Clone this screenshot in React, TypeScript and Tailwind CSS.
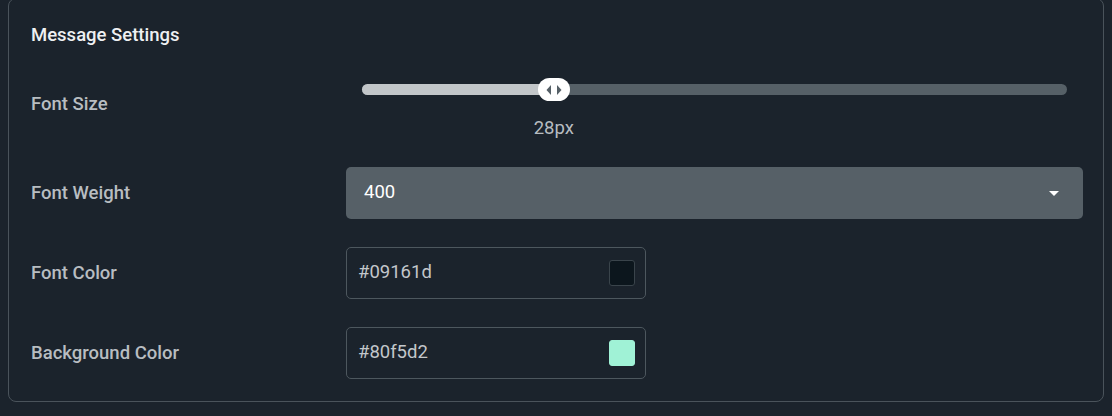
import { ReactNode } from "react"

interface RowProps {
    label: string
    height: string
    children: ReactNode
}

function Row(props: RowProps) {
    return <div className={`flex items-center ${props.height}`}>
        <div className="w-[315px] shrink-0 pt-[2px] text-[18.5px] font-medium text-[#b8bdc1]">{props.label}</div>
        <div className="flex-1 self-stretch">{props.children}</div>
    </div>
}

function FontSizeSlider() {
    const pct = "27.2%"
    return <div className="relative mx-4 h-full">
        <div className="absolute inset-x-0 top-[15px] h-[11px] rounded-full bg-[#566067]" />
        <div className="absolute left-0 top-[15px] h-[11px] rounded-l-full bg-[#c2c6c9]" style={{ width: pct }} />
        <div
            className="absolute top-[9px] flex h-[23px] w-[32px] -translate-x-1/2 items-center justify-center gap-[6px] rounded-full bg-white"
            style={{ left: pct }}>
            <svg width="5" height="10" viewBox="0 0 5 10"><path d="M5 0 L0.5 5 L5 10 Z" fill="#566067" /></svg>
            <svg width="5" height="10" viewBox="0 0 5 10"><path d="M0 0 L4.5 5 L0 10 Z" fill="#566067" /></svg>
        </div>
        <div
            className="absolute top-[47px] -translate-x-1/2 text-[18.5px] leading-6 text-[#b7bcc0]"
            style={{ left: pct }}>
            28px
        </div>
    </div>
}

function ColorInput(props: { value: string, swatch: string, border: string }) {
    return <div className="flex h-full w-[300px] items-center justify-between rounded-[5px] border border-[#4d575e] pl-[11px] pr-[10px]">
        <span className="text-[18.5px] text-[#c3c7cb]">{props.value}</span>
        <div className={`h-[26px] w-[26px] rounded-[3px] border ${props.border} ${props.swatch}`} />
    </div>
}

export default function App() {
    return <div className="min-h-[416px] bg-[#1b232c] px-2 pb-[14px] font-['Roboto',sans-serif]">
        <div className="-mt-[2px] flex flex-col rounded-[8px] border border-[#4a535b] pb-[22px] pl-[22px] pr-[20px] pt-[24px]">
            <div className="h-6 text-[18.5px] font-medium leading-6 text-[#eef0f2]">Message Settings</div>

            <div className="mt-[22px] flex flex-col gap-[28px]">
                <Row label="Font Size" height="h-[70px]">
                    <FontSizeSlider />
                </Row>

                <Row label="Font Weight" height="h-[52px]">
                    <div className="flex h-full items-center justify-between rounded-[5px] bg-[#566067] pl-[18px] pr-[24px]">
                        <span className="text-[18.5px] text-white">400</span>
                        <svg width="10" height="5" viewBox="0 0 10 5"><path d="M0 0 L10 0 L5 5 Z" fill="white" /></svg>
                    </div>
                </Row>

                <Row label="Font Color" height="h-[52px]">
                    <ColorInput value="#09161d" swatch="bg-[#0c161d]" border="border-[#3a444b]" />
                </Row>

                <Row label="Background Color" height="h-[52px]">
                    <ColorInput value="#80f5d2" swatch="bg-[#a0f2d6]" border="border-[#a0f2d6]" />
                </Row>
            </div>
        </div>
    </div>
}
